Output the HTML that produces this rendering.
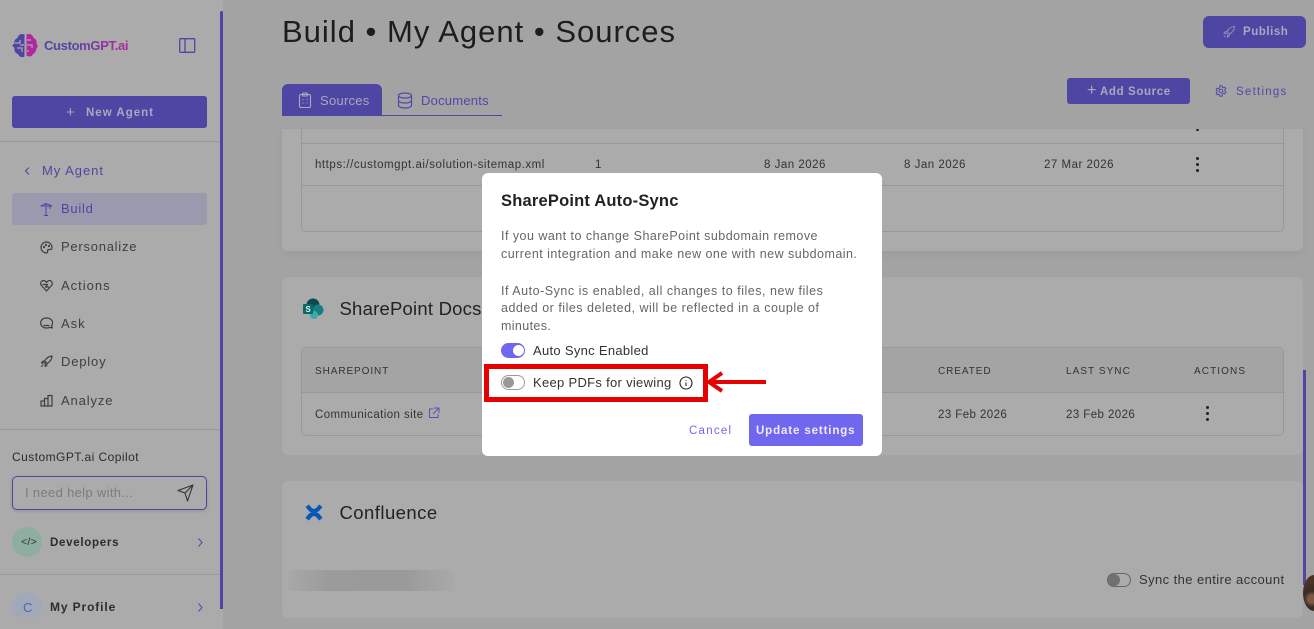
<!DOCTYPE html>
<html><head><meta charset="utf-8"><style>
html,body{margin:0;padding:0}
body{width:1314px;height:629px;overflow:hidden;position:relative;background:#a3a3a3;font-family:"Liberation Sans",sans-serif}
div,span,svg{position:absolute;box-sizing:border-box}
.t{white-space:nowrap;line-height:16px}
.nav{font-size:13px;letter-spacing:.82px;color:#3f3f3f;left:61px}
.ic{fill:none;stroke:#3f3f3f;stroke-width:1.2;stroke-linecap:round;stroke-linejoin:round}
.cell{font-size:11.5px;letter-spacing:.42px;color:#333}
.th{font-size:10px;letter-spacing:.92px;color:#333}
.m{font-size:12.5px;letter-spacing:.47px;color:#666;left:501px;line-height:18px}
.dot{width:3px;height:3px;border-radius:50%;background:#222}
</style></head><body>

<!-- main cards -->
<div style="left:282px;top:129px;width:1021px;height:122px;background:#ababab;border-radius:0 0 6px 6px;box-shadow:0 3px 8px rgba(0,0,0,.05)"></div>
<div style="left:301px;top:129px;width:983px;height:103px;border:1px solid #989898;border-top:0;border-radius:0 0 5px 5px"></div>
<div style="left:301px;top:143px;width:983px;height:1px;background:#989898"></div>
<div style="left:301px;top:185px;width:983px;height:1px;background:#989898"></div>
<div class="dot" style="left:1196px;top:129px;height:2px"></div>
<span class="t cell" style="left:315px;top:157px;letter-spacing:.54px">https://customgpt.ai/solution-sitemap.xml</span>
<span class="t cell" style="left:595px;top:157px">1</span>
<span class="t cell" style="left:764px;top:157px;letter-spacing:.5px">8 Jan 2026</span>
<span class="t cell" style="left:904px;top:157px;letter-spacing:.5px">8 Jan 2026</span>
<span class="t cell" style="left:1044px;top:157px;letter-spacing:.5px">27 Mar 2026</span>
<div class="dot" style="left:1196px;top:157px"></div><div class="dot" style="left:1196px;top:163px"></div><div class="dot" style="left:1196px;top:169px"></div>

<div style="left:282px;top:277px;width:1021px;height:178px;background:#ababab;border-radius:6px"></div>
<svg style="left:302px;top:297px" width="24" height="24" viewBox="0 0 24 24"><circle cx="11" cy="8" r="6.5" fill="#0b4a4c"/><circle cx="16" cy="13" r="5.5" fill="#177f80"/><circle cx="12" cy="18" r="4" fill="#3ba9ac"/><rect x="1" y="7" width="10" height="10" rx="1" fill="#0f6668"/><text x="3.5" y="15" font-size="8" font-weight="700" fill="#cfe" font-family="Liberation Sans">S</text></svg>
<span class="t" style="left:339.500px;top:298px;font-size:18.5px;line-height:22px;letter-spacing:.22px;color:#222">SharePoint Docs</span>
<div style="left:301px;top:347px;width:983px;height:89px;border:1px solid #989898;border-radius:5px;overflow:hidden"><div style="left:0;top:0;width:100%;height:45px;background:#a4a4a4;border-bottom:1px solid #989898"></div></div>
<span class="t th" style="left:315px;top:364px">SHAREPOINT</span>
<span class="t th" style="left:938px;top:364px">CREATED</span>
<span class="t th" style="left:1066px;top:364px;letter-spacing:1.05px">LAST SYNC</span>
<span class="t th" style="left:1194px;top:364px;letter-spacing:1.1px">ACTIONS</span>
<span class="t cell" style="left:315px;top:407px">Communication site</span>
<svg style="left:428px;top:407px" width="12" height="12" viewBox="0 0 12 12" fill="none" stroke="#5a52b0" stroke-width="1"><path d="M5 2H1.500v8.500H10V7M6 1h5v5M11 1L5 7"/></svg>
<span class="t cell" style="left:938px;top:407px">23 Feb 2026</span>
<span class="t cell" style="left:1066px;top:407px">23 Feb 2026</span>
<div class="dot" style="left:1206px;top:406px"></div><div class="dot" style="left:1206px;top:412px"></div><div class="dot" style="left:1206px;top:418px"></div>

<div style="left:282px;top:481px;width:1021px;height:137px;background:#ababab;border-radius:6px"></div>
<svg style="left:304px;top:503px" width="20" height="19" viewBox="0 0 20 19"><path d="M1.500 4L5 1.500C7 4.500 9 6 10 6s3-1.500 5-4.500L18.500 4C16 7 14.500 9 12.500 9.500 15 10 16.500 12 18.500 15L15 17.500C13 14.500 11 13 10 13s-3 1.500-5 4.500L1.500 15C3.500 12 5 10 7.500 9.500 5.500 9 4 7 1.500 4Z" fill="#0a55b8"/></svg>
<span class="t" style="left:339.500px;top:502px;font-size:18.5px;line-height:22px;letter-spacing:.45px;color:#222">Confluence</span>
<div style="left:288px;top:570px;width:166px;height:21px;background:linear-gradient(90deg,#a8a8a8,#9b9b9b 25%,#9a9a9a 70%,#a9a9a9)"></div>
<div style="left:1107px;top:573px;width:24px;height:14px;border:1px solid #666;border-radius:7px"></div>
<div style="left:1108px;top:574px;width:12px;height:12px;border-radius:50%;background:#707070"></div>
<span class="t" style="left:1139px;top:572px;font-size:13px;letter-spacing:.42px;color:#333">Sync the entire account</span>

<!-- scrollbar and avatar -->
<div style="left:1303px;top:370px;width:3px;height:215px;background:#4f46a3"></div>
<div style="left:1303px;top:575px;width:22px;height:36px;border-radius:50% 0 0 50%;background:radial-gradient(circle at 9px 24px,#7a5a44 0 4px,#382c25 8px,#4a3428 18px)"></div>

<!-- header -->
<span class="t" style="left:282px;top:14px;font-size:31px;line-height:36px;letter-spacing:1px;color:#1d1d1d">Build • My Agent • Sources</span>
<div style="left:1203px;top:16px;width:103px;height:32px;background:#4f46a3;border-radius:6px"></div>
<svg style="left:1222px;top:25px" width="14" height="14" viewBox="0 0 14 14" fill="none" stroke="#8f8ab8" stroke-width="1.100"><path d="M5 6.500C7 3 9.500 1.500 12.500 1.500 12.500 4.500 11 7 7.500 9ZM5 6.500L3 7 2 8.500l3-.2M7.500 9L7 11l-1.500 1 .2-3M3.500 10.500L2 12"/></svg>
<span class="t" style="left:1243px;top:24px;font-size:11.500px;font-weight:700;letter-spacing:.55px;color:#aaa8bd">Publish</span>

<div style="left:282px;top:84px;width:100px;height:32px;background:#4f46a3;border-radius:6px 6px 0 0"></div>
<div style="left:382px;top:115px;width:120px;height:1px;background:#4f46a3"></div>
<svg style="left:297px;top:92px" width="16" height="17" viewBox="0 0 16 17" fill="none" stroke="#aaa8bd" stroke-width="1.100"><rect x="2.500" y="2.500" width="11" height="13" rx="1.500"/><rect x="5.500" y="1" width="5" height="3" rx=".8"/><path d="M5.500 7.500h1M9.500 7.500h1M5.500 11h1M9.500 11h1"/></svg>
<span class="t" style="left:320px;top:93px;font-size:13px;letter-spacing:.27px;color:#aaa8bd">Sources</span>
<svg style="left:397px;top:92px" width="16" height="17" viewBox="0 0 16 17" fill="none" stroke="#5049a8" stroke-width="1.200"><ellipse cx="8" cy="3.500" rx="6.500" ry="2.500"/><path d="M1.500 3.500v10c0 1.400 3 2.500 6.500 2.500s6.500-1.100 6.500-2.500v-10M1.500 8.500C1.500 9.900 4.500 11 8 11s6.500-1.100 6.500-2.500"/></svg>
<span class="t" style="left:421px;top:93px;font-size:13px;letter-spacing:.23px;color:#5049a8">Documents</span>
<div style="left:1067px;top:78px;width:123px;height:26px;background:#4f46a3;border-radius:3px"></div>
<span class="t" style="left:1087px;top:83px;font-size:16px;color:#aaa8bd">+</span>
<span class="t" style="left:1100px;top:84px;font-size:11.500px;font-weight:700;letter-spacing:.62px;color:#aaa8bd">Add Source</span>
<svg style="left:1215px;top:85px" width="12" height="12" viewBox="0 0 12 12" fill="none" stroke="#5049a8" stroke-width="1"><circle cx="6" cy="6" r="1.800"/><path d="M5 .7h2l.3 1.400 1.200.6 1.300-.5 1 1.700-1 1 .1 1.200 1 1-1 1.700-1.300-.5-1.200.6L7 11.300H5l-.3-1.400-1.200-.6-1.300.5-1-1.700 1-1-.1-1.200-1-1 1-1.700 1.300.5 1.200-.6Z"/></svg>
<span class="t" style="left:1236px;top:84px;font-size:11.500px;letter-spacing:1.25px;color:#5049a8">Settings</span>

<!-- sidebar -->
<div style="left:0;top:0;width:223px;height:629px;background:#ababab"></div>
<div style="left:220px;top:11px;width:3px;height:598px;background:#4f46a3;border-radius:2px 2px 0 0"></div>
<svg style="left:12px;top:33px" width="27" height="25" viewBox="0 0 27 25"><path d="M12.500 1.500C9 0 6 2 5.500 5 2.500 6 2 9 2.500 10.500L0 12.500l2.500 2.500C2 18 3.500 20.500 6 21c1 3 4.500 4 6.500 2.500Z" fill="#4f46a3"/><path d="M14.500 1.500C18 0 21 2 21.500 5c3 1 3.500 4 3 5.500 1.500 1.500 1.500 3.500 0 5-.5 3-1.500 4.500-3.500 5.500-1 3-4.500 3-6.500 1.500Z" fill="#b0279f"/><path d="M3 10h5V7M5 15h5v4M8 12h4M15 7h4M15 12h5v3M17 18h-2" stroke="#ababab" stroke-width="1.200" fill="none"/></svg>
<span class="t" style="left:44px;top:38px;font-size:13px;font-weight:700;letter-spacing:-.33px;background:linear-gradient(90deg,#4f46a3 30%,#b0279f 95%);-webkit-background-clip:text;background-clip:text;color:transparent">CustomGPT.ai</span>
<svg style="left:179px;top:38px" width="17" height="15" viewBox="0 0 17 15" fill="none" stroke="#4f46a3" stroke-width="1.300"><rect x=".7" y=".7" width="15" height="13.600" rx="1"/><path d="M6 .7v13.600"/></svg>

<div style="left:12px;top:96px;width:195px;height:32px;background:#4f46a3;border-radius:3px"></div>
<span class="t" style="left:66px;top:105px;font-size:15px;color:#aaa8bd">+</span>
<span class="t" style="left:86px;top:105px;font-size:11.500px;font-weight:700;letter-spacing:1px;color:#aaa8bd">New Agent</span>
<div style="left:0;top:141px;width:220px;height:1px;background:#999"></div>

<svg style="left:24px;top:166px" width="7" height="10" viewBox="0 0 7 10" fill="none" stroke="#4f46a3" stroke-width="1.100"><path d="M5 1.500L1.500 5 5 8.500"/></svg>
<span class="t" style="left:42px;top:163px;font-size:13px;letter-spacing:.97px;color:#4f46a3">My Agent</span>
<div style="left:12px;top:193px;width:195px;height:32px;background:#9a99ae;border-radius:3px"></div>
<svg style="left:40px;top:202px" width="13" height="14" viewBox="0 0 13 14" fill="none" stroke="#4f46a3" stroke-width="1"><path d="M.7 4L6 1.500 12 4H.7ZM6 1.500V13.500M4 13.500H8M10 4v3"/></svg>
<span class="t" style="left:61px;top:201px;font-size:13px;letter-spacing:.75px;color:#4f46a3">Build</span>

<svg class="ic" style="left:40px;top:241px" width="13" height="13" viewBox="0 0 13 13"><path d="M6.500 1C3.500 1 1 3.500 1 6.500S3.500 12 6.500 12c1.500 0 1.200-1.200 1-2-.2-1 .5-1.500 1.500-1.500h1.500c1 0 1.500-.7 1.500-2C12 3.500 9.500 1 6.500 1Z"/><circle cx="4" cy="6" r=".5"/><circle cx="6" cy="4" r=".5"/><circle cx="9" cy="5" r=".5"/></svg>
<span class="t nav" style="top:239px;letter-spacing:.75px">Personalize</span>
<svg class="ic" style="left:40px;top:279px" width="13" height="13" viewBox="0 0 13 13"><path d="M6.500 12L1 6C0 4 1.500 1.500 3.500 1.500c1.500 0 2.300 1 3 2 .7-1 1.500-2 3-2C11.500 1.500 13 4 12 6ZM3 5.500h4.500L5.500 8h3"/></svg>
<span class="t nav" style="top:278px;letter-spacing:1px">Actions</span>
<svg class="ic" style="left:40px;top:317px" width="13" height="13" viewBox="0 0 13 13"><path d="M6.500 1C3 1 .7 3 .7 6c0 2.800 2.300 5 5.800 5 1.300 0 2.500-.2 3.500-.7l2.300.7-.7-2c.7-.9 1-2 1-3C12.600 3 10 1 6.500 1ZM4 8.500h5"/></svg>
<span class="t nav" style="top:316px;letter-spacing:1px">Ask</span>
<svg class="ic" style="left:40px;top:355px" width="13" height="13" viewBox="0 0 13 13"><path d="M4.500 6C6.500 3 9 1.200 12 1c0 3-1.800 5.500-4.800 7.500ZM4.500 6L2.500 6.500 1.500 8l3-.2M7.200 8.500L6.700 10.500 5.200 11.500l.2-3M3 10L1.500 11.500"/></svg>
<span class="t nav" style="top:354px">Deploy</span>
<svg class="ic" style="left:40px;top:394px" width="13" height="13" viewBox="0 0 13 13"><path d="M1 7h3.500v5H1ZM4.500 4.500H8V12H4.500ZM8 1.500h4V12H8Z"/></svg>
<span class="t nav" style="top:393px;letter-spacing:.88px">Analyze</span>

<div style="left:0;top:429px;width:220px;height:1px;background:#999"></div>
<span class="t" style="left:12px;top:449px;font-size:12px;letter-spacing:.45px;color:#2c2c2c">CustomGPT.ai Copilot</span>
<div style="left:12px;top:476px;width:195px;height:34px;border:1px solid #4f46a3;border-radius:5px;box-shadow:0 1px 3px rgba(0,0,0,.15)"></div>
<span class="t" style="left:25px;top:485px;font-size:13px;letter-spacing:.33px;color:#7c7c7c">I need help with...</span>
<svg style="left:177px;top:484px" width="17" height="18" viewBox="0 0 17 18" fill="none" stroke="#333" stroke-width="1.100" stroke-linejoin="round"><path d="M1 6.500L16 1 10.500 17 8 9ZM8 9L16 1"/></svg>
<div style="left:12px;top:527px;width:30px;height:30px;border-radius:50%;background:#8eaf9f"></div>
<span class="t" style="left:21px;top:534px;font-size:10.500px;letter-spacing:.3px;color:#2c2c2c">&lt;/&gt;</span>
<span class="t" style="left:50px;top:535px;font-size:11.500px;font-weight:700;letter-spacing:.72px;color:#2c2c2c">Developers</span>
<svg style="left:197px;top:537px" width="7" height="11" viewBox="0 0 7 11" fill="none" stroke="#5049a8" stroke-width="1"><path d="M1.500 1.500l3.500 4-3.500 4"/></svg>
<div style="left:0;top:574px;width:220px;height:1px;background:#999"></div>
<div style="left:12px;top:592px;width:30px;height:25px;overflow:hidden"><div style="left:0;top:0;width:30px;height:30px;border-radius:50%;background:#a1a9b8"></div><span class="t" style="left:11px;top:8px;font-size:13px;color:#4f66b0">C</span></div>
<span class="t" style="left:50px;top:599px;font-size:12px;font-weight:700;letter-spacing:.88px;color:#2c2c2c">My Profile</span>
<svg style="left:197px;top:602px" width="7" height="11" viewBox="0 0 7 11" fill="none" stroke="#5049a8" stroke-width="1"><path d="M1.500 1.500l3.500 4-3.500 4"/></svg>

<!-- modal -->
<div style="left:482px;top:173px;width:400px;height:283px;background:#fff;border-radius:6px"></div>
<span class="t" style="left:501px;top:192px;font-size:16.500px;line-height:18px;font-weight:700;letter-spacing:.2px;color:#222">SharePoint Auto-Sync</span>
<span class="t m" style="top:227px">If you want to change SharePoint subdomain remove</span>
<span class="t m" style="top:245px">current integration and make new one with new subdomain.</span>
<span class="t m" style="top:282px;letter-spacing:.52px">If Auto-Sync is enabled, all changes to files, new files</span>
<span class="t m" style="top:299px;letter-spacing:.5px">added or files deleted, will be reflected in a couple of</span>
<span class="t m" style="top:317px;letter-spacing:.37px">minutes.</span>
<div style="left:501px;top:343px;width:24px;height:15px;border-radius:8px;background:#7166ee"></div>
<div style="left:513px;top:345px;width:11px;height:11px;border-radius:50%;background:#fff"></div>
<span class="t" style="left:533px;top:343px;font-size:13px;letter-spacing:.3px;color:#333">Auto Sync Enabled</span>

<div style="left:484px;top:364px;width:224px;height:38px;border:5px solid #e60000"></div>
<div style="left:501px;top:375px;width:24px;height:15px;border-radius:8px;border:1px solid #999"></div>
<div style="left:503px;top:377px;width:11px;height:11px;border-radius:50%;background:#999"></div>
<span class="t" style="left:533px;top:375px;font-size:13px;letter-spacing:.3px;color:#333">Keep PDFs for viewing</span>
<svg style="left:679px;top:376px" width="14" height="14" viewBox="0 0 14 14" fill="none" stroke="#222" stroke-width="1.100"><circle cx="7" cy="7" r="6"/><path d="M7 6.500V10M7 4v.8"/></svg>
<svg style="left:705px;top:368px" width="62" height="28" viewBox="0 0 62 28" fill="none" stroke="#e60000"><path d="M61 14H6" stroke-width="4"/><path d="M17 5L4 14l13 9" stroke-width="4"/></svg>
<span class="t" style="left:689px;top:423px;font-size:11.500px;letter-spacing:1.25px;color:#7166ee">Cancel</span>
<div style="left:749px;top:414px;width:114px;height:32px;background:#7166ee;border-radius:3px"></div>
<span class="t" style="left:756px;top:423px;font-size:11.500px;font-weight:700;letter-spacing:.88px;color:#eeedfc">Update settings</span>
</body></html>
